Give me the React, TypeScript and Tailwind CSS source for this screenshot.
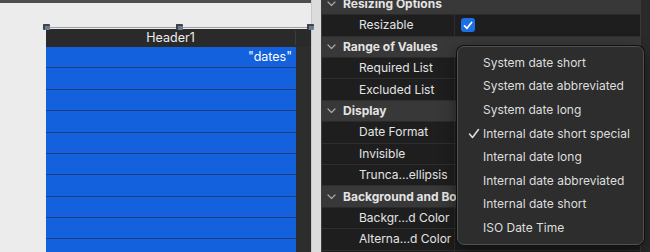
import React from "react";

const font = { fontFamily: "Inter, 'Liberation Sans', sans-serif" };

type Row =
  | { kind: "section"; label: string }
  | { kind: "prop"; label: string; check?: boolean };

const rows: Row[] = [
  { kind: "section", label: "Resizing Options" },
  { kind: "prop", label: "Resizable", check: true },
  { kind: "section", label: "Range of Values" },
  { kind: "prop", label: "Required List" },
  { kind: "prop", label: "Excluded List" },
  { kind: "section", label: "Display" },
  { kind: "prop", label: "Date Format" },
  { kind: "prop", label: "Invisible" },
  { kind: "prop", label: "Trunca…ellipsis" },
  { kind: "section", label: "Background and Border" },
  { kind: "prop", label: "Backgr…d Color" },
  { kind: "prop", label: "Alterna…d Color" },
  { kind: "prop", label: "" },
];

const menu = [
  "System date short",
  "System date abbreviated",
  "System date long",
  "Internal date short special",
  "Internal date long",
  "Internal date abbreviated",
  "Internal date short",
  "ISO Date Time",
];

function Chevron() {
  return (
    <svg width="9" height="6" viewBox="0 0 9 6" className="shrink-0">
      <path d="M1 1 L4.5 4.5 L8 1" fill="none" stroke="#a8a8a8" strokeWidth="1.2" strokeLinecap="round" strokeLinejoin="round" />
    </svg>
  );
}

function Handle() {
  return <div className="w-[7px] h-[6px] bg-[#6d7c8c] border-t-2 border-l-2 border-[#3c4450] rounded-[1px]" />;
}

export default function App() {
  return (
    <div className="w-[650px] h-[252px] overflow-hidden flex relative bg-[#ececec]" style={font}>
      {/* Canvas */}
      <div className="w-[311px] h-full flex flex-col bg-[#ececec] relative">
        <div className="h-[3px] bg-[#4e4e4e] shrink-0" />
        <div className="absolute left-[46px] top-[27px] w-[265px] h-px bg-[#9aa0a8]" />
        <div className="absolute left-[43px] top-[24px]"><Handle /></div>
        <div className="absolute left-[176px] top-[24px]"><Handle /></div>
        <div className="absolute left-[307px] top-[24px]"><Handle /></div>
        <div className="ml-[46px] mt-[26px] flex flex-col flex-1">
          <div className="h-[18px] flex bg-[#2a2a2a] shrink-0">
            <div className="w-[249px] flex items-center justify-center text-[12.5px] text-[#ececec]">Header1</div>
            <div className="w-px bg-[#3c3c3c] my-[2px]" />
            <div className="flex-1" />
          </div>
          <div className="flex flex-1">
            <div className="w-[250px] flex flex-col">
              {Array.from({ length: 10 }).map((_, i) => (
                <div
                  key={i}
                  className="h-[21.375px] shrink-0 bg-[#1361dc] border-b-[1.4px] border-[#1d3f7c] flex items-center justify-end pr-[4px] text-[12.5px] text-white"
                >
                  {i === 0 ? '"dates"' : ""}
                </div>
              ))}
            </div>
            <div className="flex-1 bg-[#2d2d2d]" />
          </div>
        </div>
      </div>
      <div className="w-[10px] h-full bg-[#dcdcdc] border-l border-[#c8c8c8]" />
      <div className="w-px h-full bg-[#3e3e3e]" />
      {/* Inspector */}
      <div className="flex-1 h-full flex bg-[#1e1e1e]">
        <div className="w-[318px] flex flex-col mt-[-6.2px]">
          {rows.map((r, i) =>
            r.kind === "section" ? (
              <div
                key={i}
                className="h-[21.4px] shrink-0 flex items-center bg-[#383838] border-b border-[#2a2a2a] pl-[5px] gap-[7px] text-[12px] font-bold text-[#e4e4e4] whitespace-nowrap overflow-hidden"
              >
                <Chevron />
                <span>{r.label}</span>
              </div>
            ) : (
              <div key={i} className="h-[21.4px] shrink-0 flex bg-[#1e1e1e] border-b border-[#2e2e2e] text-[12px] text-[#e4e4e4]">
                <div className="w-[133px] pl-[37px] flex items-center whitespace-nowrap border-r border-[#2e2e2e]">{r.label}</div>
                <div className="flex-1 flex items-center pl-[6px]">
                  {r.check && (
                    <div className="w-[14px] h-[14px] rounded-[3px] bg-[#1d6fe3] flex items-center justify-center">
                      <svg width="10" height="9" viewBox="0 0 10 9">
                        <path d="M1.5 4.8 L4 7.3 L8.6 1.5" fill="none" stroke="white" strokeWidth="1.7" strokeLinecap="round" strokeLinejoin="round" />
                      </svg>
                    </div>
                  )}
                </div>
              </div>
            )
          )}
        </div>
        <div className="w-px h-full bg-[#3a3a3a]" />
        <div className="flex-1 h-full bg-[#2a2a2a]" />
      </div>
      {/* Popup menu */}
      <div className="absolute left-[457px] top-[46px] w-[187px] h-[199px] rounded-[7px] bg-[#2d2d2d] border border-[#505050] shadow-[0_0_0_1px_#111,0_6px_16px_rgba(0,0,0,0.5)] pt-[4px] flex flex-col">
        {menu.map((m, i) => (
          <div key={i} className="h-[23.6px] shrink-0 flex items-center text-[12px] text-[#dedede] whitespace-nowrap">
            <div className="w-[25px] flex justify-end pr-[3px]">
              {i === 3 && (
                <svg width="12" height="11" viewBox="0 0 12 11">
                  <path d="M1.5 6 L4.5 9.5 L10.5 1.5" fill="none" stroke="#e0e0e0" strokeWidth="1.5" strokeLinecap="round" strokeLinejoin="round" />
                </svg>
              )}
            </div>
            <span>{m}</span>
          </div>
        ))}
      </div>
    </div>
  );
}
